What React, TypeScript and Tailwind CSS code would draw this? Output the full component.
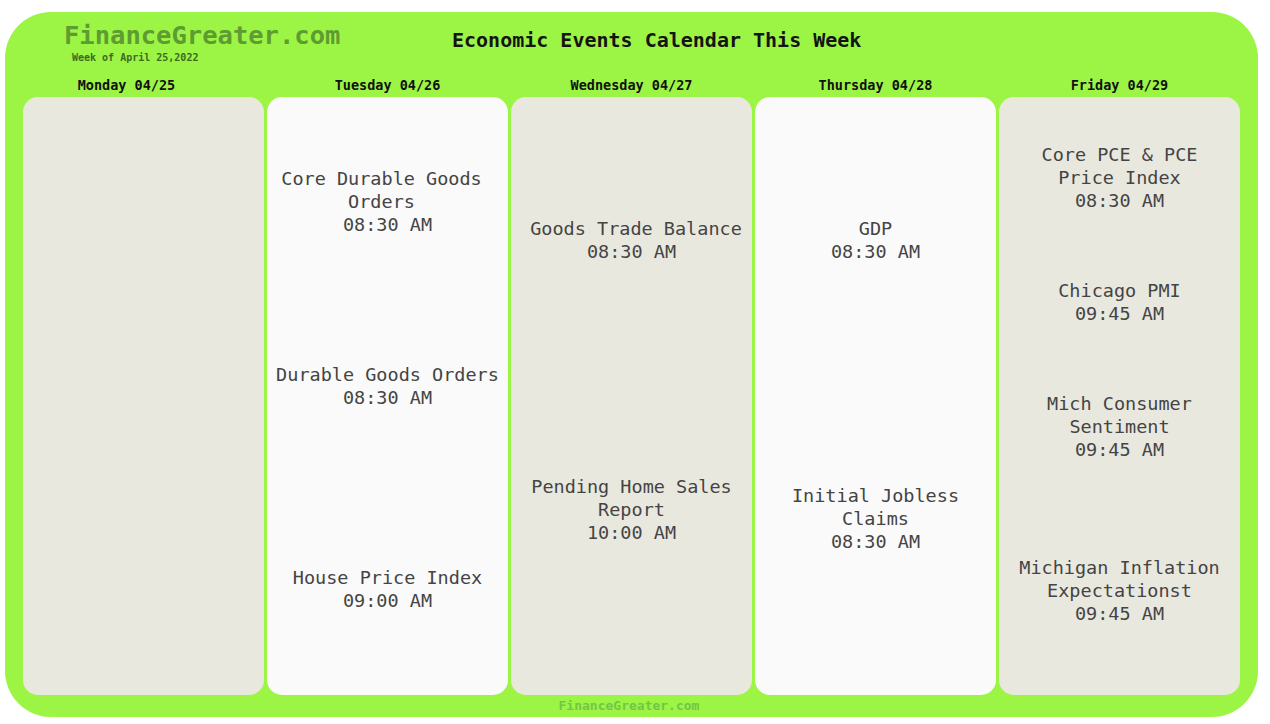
type Ev = { title: string; time: string; cls: string; titleCls: string };

type Day = { label: string; headCls: string; bg: string; events: Ev[] };

const days: Day[] = [
  { label: "Monday 04/25", headCls: "pr-[34px]", bg: "bg-[#e9e8df]", events: [] },
  {
    label: "Tuesday 04/26",
    headCls: "",
    bg: "bg-[#fafafa]",
    events: [
      { title: "Core Durable Goods Orders", time: "08:30 AM", cls: "mt-[70px]", titleCls: "pr-3" },
      { title: "Durable Goods Orders", time: "08:30 AM", cls: "mt-[127px]", titleCls: "" },
      { title: "House Price Index", time: "09:00 AM", cls: "mt-[157px]", titleCls: "" },
    ],
  },
  {
    label: "Wednesday 04/27",
    headCls: "",
    bg: "bg-[#e9e8df]",
    events: [
      { title: "Goods Trade Balance", time: "08:30 AM", cls: "mt-[120px]", titleCls: "pl-[9px]" },
      { title: "Pending Home Sales Report", time: "10:00 AM", cls: "mt-[212px]", titleCls: "" },
    ],
  },
  {
    label: "Thursday 04/28",
    headCls: "",
    bg: "bg-[#fafafa]",
    events: [
      { title: "GDP", time: "08:30 AM", cls: "mt-[120px]", titleCls: "" },
      { title: "Initial Jobless Claims", time: "08:30 AM", cls: "mt-[221px]", titleCls: "" },
    ],
  },
  {
    label: "Friday 04/29",
    headCls: "",
    bg: "bg-[#e9e8df]",
    events: [
      { title: "Core PCE & PCE Price Index", time: "08:30 AM", cls: "mt-[46px]", titleCls: "px-6" },
      { title: "Chicago PMI", time: "09:45 AM", cls: "mt-[67px]", titleCls: "" },
      { title: "Mich Consumer Sentiment", time: "09:45 AM", cls: "mt-[67px]", titleCls: "" },
      { title: "Michigan Inflation Expectationst", time: "09:45 AM", cls: "mt-[95px]", titleCls: "" },
    ],
  },
];

export default function App() {
  return (
    <div className="w-[1270px] h-[724px] bg-white pl-[5px] pt-[12px] font-['DejaVu_Sans_Mono',monospace]">
      <div className="w-[1253px] h-[705px] bg-[#9cf545] rounded-[46px] px-[18px] flex flex-col">
        {/* header */}
        <div className="flex h-[66px]">
          <div className="w-[340px] pl-[41px] pt-[8px]">
            <div className="text-[25.5px] leading-[30px] font-bold text-[#5e9b31]">
              FinanceGreater.com
            </div>
            <div className="text-[10px] leading-[12px] font-bold text-[#3c6a22] pl-[8px] mt-[2px]">
              Week of April 25,2022
            </div>
          </div>
          <div className="pl-[89px] pt-[16px] text-[20px] leading-[24px] font-bold text-[#141414]">
            Economic Events Calendar This Week
          </div>
        </div>

        {/* columns */}
        <div className="flex gap-[3px]">
          {days.map((d) => (
            <div key={d.label} className="w-[241px] flex flex-col">
              <div
                className={`h-[19px] text-center text-[13.5px] leading-[14px] font-semibold text-[#111] ${d.headCls}`}
              >
                {d.label}
              </div>
              <div className={`h-[598px] rounded-[15px] px-1 flex flex-col ${d.bg}`}>
                {d.events.map((e) => (
                  <div
                    key={e.title}
                    className={`text-center text-[18.5px] leading-[23px] text-[#444] ${e.cls}`}
                  >
                    <div className={e.titleCls}>{e.title}</div>
                    <div>{e.time}</div>
                  </div>
                ))}
              </div>
            </div>
          ))}
        </div>

        {/* footer */}
        <div className="text-center pt-[3px] text-[13px] leading-[16px] font-bold text-[#74c545] pr-[5px]">
          FinanceGreater.com
        </div>
      </div>
    </div>
  );
}
